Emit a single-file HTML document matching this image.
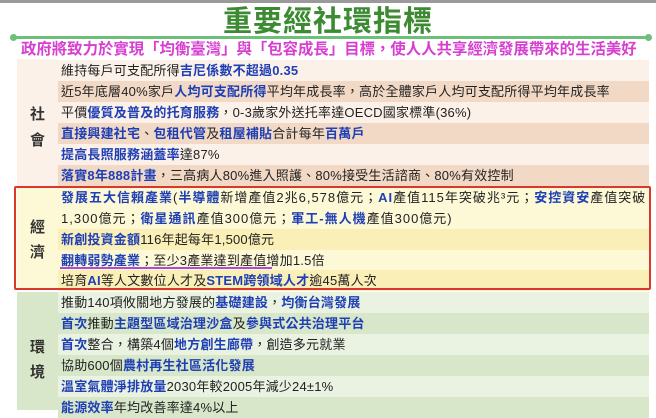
<!DOCTYPE html>
<html><head><meta charset="utf-8"><style>
*{margin:0;padding:0;box-sizing:border-box}
body{width:656px;height:410px;overflow:hidden;background:#fff;font-family:"Liberation Sans","Noto Sans CJK TC",sans-serif;position:relative}
.top{position:absolute;left:0;top:0;width:656px;height:3px;background:#9a9a9a}
.title{position:absolute;left:0;top:5px;width:656px;text-align:center;font-size:29px;font-weight:bold;color:#3c8a32;letter-spacing:1px;line-height:34px}
.line{position:absolute;left:13px;top:36px;width:636px;height:3px;background:#6cc07a;border-radius:2px}
.dot{position:absolute;top:34px;width:7px;height:7px;border-radius:50%;background:#6cc07a}
.sub{position:absolute;left:21px;top:40px;width:630px;font-size:15.4px;font-weight:bold;color:#d63fd0;white-space:nowrap;line-height:20px}
.row{position:absolute;left:58px;width:591px;height:21px;font-size:13px;line-height:21px;padding-left:3px;color:#222;white-space:nowrap;letter-spacing:0.2px}
.b{color:#1f3fb5;font-weight:bold}
.lab{position:absolute;left:17px;width:41px;font-size:15px;font-weight:bold;color:#333;text-align:center}
.s1{background:#fbf1e9}.s2{background:#f2d9c6}
.e1{background:#fdf9d6}.e2{background:#fbefb8}
.g1{background:#eaf2e1}.g2{background:#d8e7c9}
</style></head><body>
<div class="top"></div>
<div class="title">重要經社環指標</div>
<div class="line"></div><div class="dot" style="left:10px"></div><div class="dot" style="left:645px"></div>
<div class="sub">政府將致力於實現「均衡臺灣」與「包容成長」目標，使人人共享經濟發展帶來的生活美好</div>

<div style="position:absolute;left:17px;top:59px;width:41px;height:128px;background:#fbf1e9"></div>
<div class="lab" style="top:103px">社</div>
<div class="lab" style="top:129px">會</div>
<div class="row s1" style="top:60px">維持每戶可支配所得<span class="b">吉尼係數不超過0.35</span></div>
<div class="row s2" style="top:81px">近5年底層40%家戶<span class="b">人均可支配所得</span>平均年成長率，高於全體家戶人均可支配所得平均年成長率</div>
<div class="row s1" style="top:102px">平價<span class="b">優質及普及的托育服務</span>，0-3歲家外送托率達OECD國家標準(36%)</div>
<div class="row s2" style="top:123px"><span class="b">直接興建社宅</span>、<span class="b">包租代管</span>及<span class="b">租屋補貼</span>合計每年<span class="b">百萬戶</span></div>
<div class="row s1" style="top:144px"><span class="b">提高長照服務涵蓋率</span>達87%</div>
<div class="row s2" style="top:165px"><span class="b">落實8年888計畫</span>，三高病人80%進入照護、80%接受生活諮商、80%有效控制</div>

<div style="position:absolute;left:17px;top:187px;width:41px;height:102px;background:#fdf9d6"></div>
<div class="lab" style="top:216px">經</div>
<div class="lab" style="top:241px">濟</div>
<div class="row e1" style="top:187px;height:42px;line-height:21px;letter-spacing:1px"><span class="b">發展五大信賴產業</span>(<span class="b">半導體</span>新增產值2兆6,578億元；<span class="b">AI</span>產值115年突破兆³元；<span class="b">安控資安</span>產值突破<br>1,300億元；<span class="b">衛星通訊</span>產值300億元；<span class="b">軍工-無人機</span>產值300億元)</div>
<div class="row e2" style="top:229px"><span class="b">新創投資金額</span>116年起每年1,500億元</div>
<div class="row e1" style="top:250px"><span class="b">翻轉弱勢產業</span>；至少3產業達到產值增加1.5倍</div>
<div style="position:absolute;left:60px;top:267px;width:212px;height:2px;background:#b04ad8"></div>
<div class="row e2" style="top:270px">培育<span class="b">AI</span>等人文數位人才及<span class="b">STEM跨領域人才</span>逾45萬人次</div>
<div style="position:absolute;left:14px;top:186px;width:637px;height:104px;border:2px solid #d9392c;border-radius:2px"></div>

<div style="position:absolute;left:17px;top:292px;width:41px;height:118px;background:#d8e7c9"></div>
<div class="lab" style="top:336px">環</div>
<div class="lab" style="top:361px">境</div>
<div class="row g1" style="top:292px">推動140項攸關地方發展的<span class="b">基礎建設</span>，<span class="b">均衡台灣發展</span></div>
<div class="row g2" style="top:313px"><span class="b">首次</span>推動<span class="b">主題型區域治理沙盒</span>及<span class="b">參與式公共治理平台</span></div>
<div class="row g1" style="top:334px"><span class="b">首次</span>整合，構築4個<span class="b">地方創生廊帶</span>，創造多元就業</div>
<div class="row g2" style="top:355px">協助600個<span class="b">農村再生社區活化發展</span></div>
<div class="row g1" style="top:376px"><span class="b">溫室氣體淨排放量</span>2030年較2005年減少24±1%</div>
<div class="row g2" style="top:397px"><span class="b">能源效率</span>年均改善率達4%以上</div>
</body></html>
